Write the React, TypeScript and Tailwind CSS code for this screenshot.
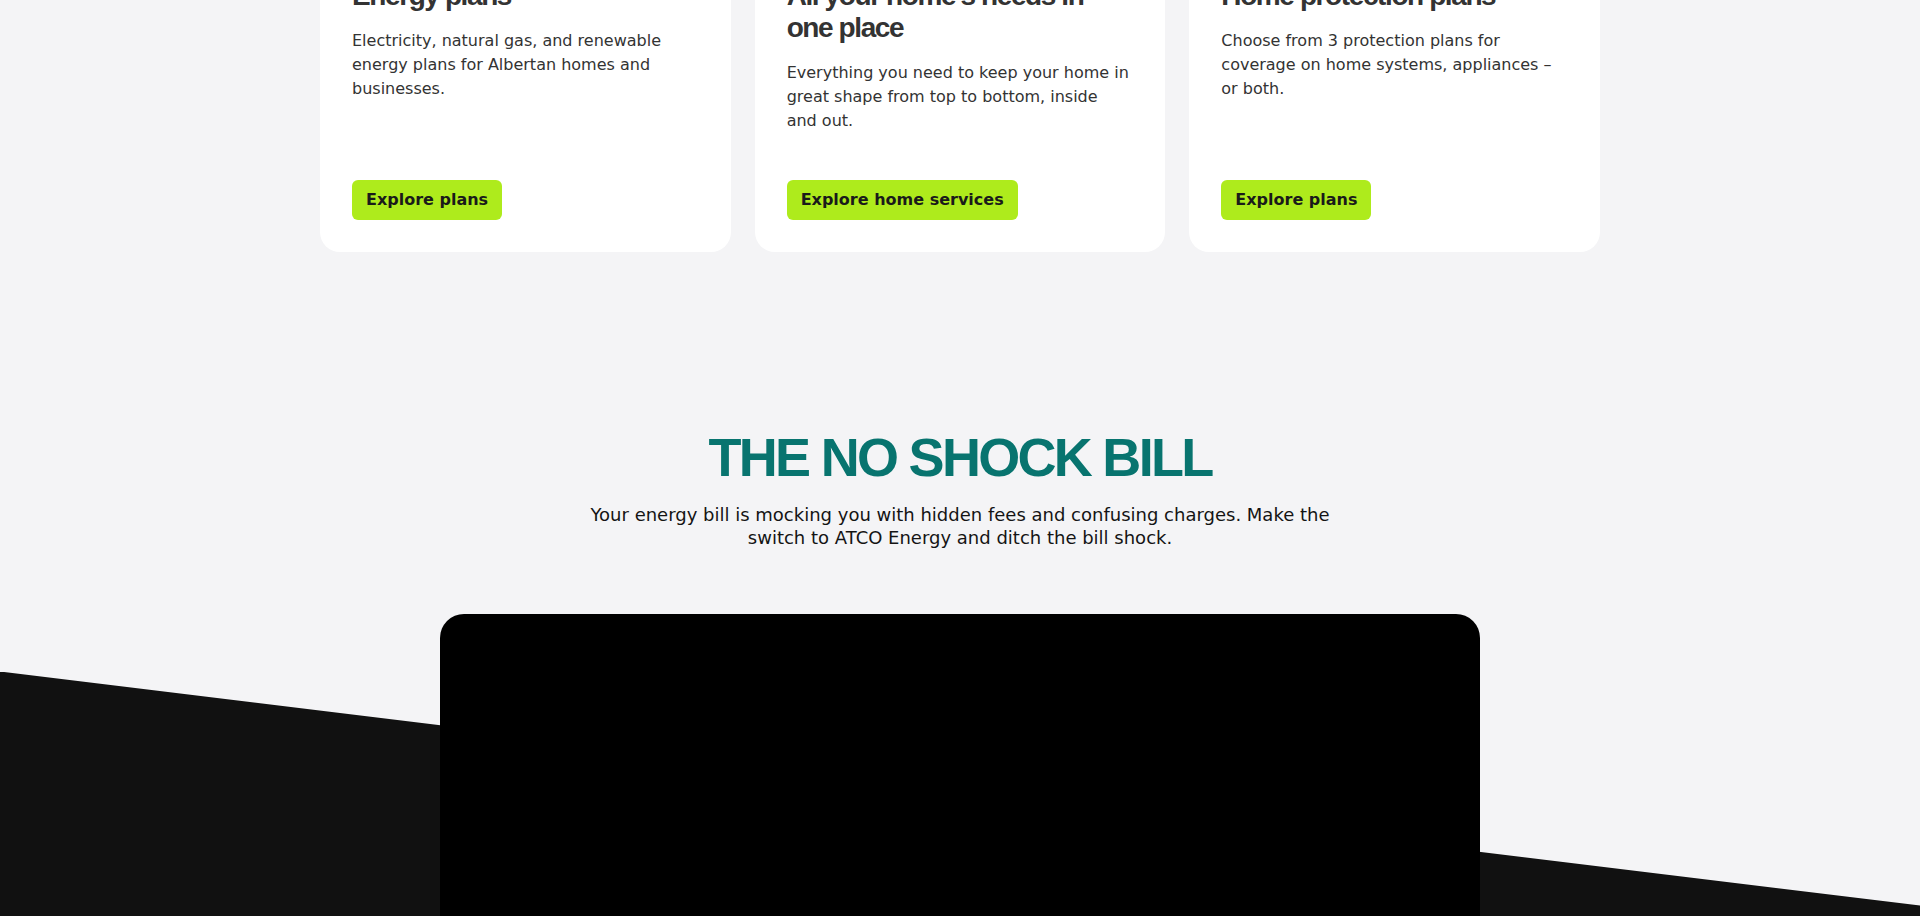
const CARDS = [
  {
    title: "Energy plans",
    body: "Electricity, natural gas, and renewable energy plans for Albertan homes and businesses.",
    cta: "Explore plans",
  },
  {
    title: "All your home’s needs in one place",
    body: "Everything you need to keep your home in great shape from top to bottom, inside and out.",
    cta: "Explore home services",
  },
  {
    title: "Home protection plans",
    body: "Choose from 3 protection plans for coverage on home systems, appliances – or both.",
    cta: "Explore plans",
  },
];

function ProductCard({ title, body, cta }: { title: string; body: string; cta: string }) {
  return (
    <div className="flex flex-col rounded-[20px] bg-white p-8">
      <h3 className="max-w-[340px] font-['Liberation_Sans',Arial,sans-serif] text-[28px] leading-[1.15] font-bold tracking-[-0.05em] text-[#333]">
        {title}
      </h3>
      <p className="mt-[17px] max-w-[345px] font-['DejaVu_Sans',Verdana,sans-serif] text-base leading-6 text-[#333]">
        {body}
      </p>
      <div className="mt-auto pt-[47px]">
        <a
          href="#"
          className="inline-block rounded-md bg-[#aeeb1c] px-[14px] py-2 font-['DejaVu_Sans',Verdana,sans-serif] text-base leading-6 font-bold text-[#1a1a1a]"
        >
          {cta}
        </a>
      </div>
    </div>
  );
}

export default function App() {
  return (
    <div className="h-screen overflow-hidden bg-[#f4f4f6]">
      {/* Product cards (page is scrolled, so tops are cut off) */}
      <section className="-mt-[52px]">
        <div className="mx-auto grid w-[1280px] grid-cols-3 gap-6">
          {CARDS.map((c) => (
            <ProductCard key={c.title} {...c} />
          ))}
        </div>
      </section>

      {/* No shock bill */}
      <section className="mt-[176px] flex flex-col items-center text-center">
        <h2 className="font-['Liberation_Sans',Arial,sans-serif] text-[54px] leading-[1.1] font-bold tracking-[-0.05em] text-[#08746f]">
          THE NO SHOCK BILL
        </h2>
        <p className="mt-[15px] max-w-3xl font-['DejaVu_Sans',Verdana,sans-serif] text-lg leading-[1.3] text-[#141414]">
          Your energy bill is mocking you with hidden fees and confusing charges. Make the switch to ATCO Energy and
          ditch the bill shock.
        </p>
      </section>

      {/* Video over slanted dark band */}
      <section className="relative mt-[64px]">
        <div className="absolute inset-x-0 top-[58px] h-[1200px] bg-[#111111] [clip-path:polygon(0_0,100%_234px,100%_100%,0_100%)]" />
        <div className="relative mx-auto h-[585px] w-[1040px] rounded-3xl bg-black" />
      </section>
    </div>
  );
}
